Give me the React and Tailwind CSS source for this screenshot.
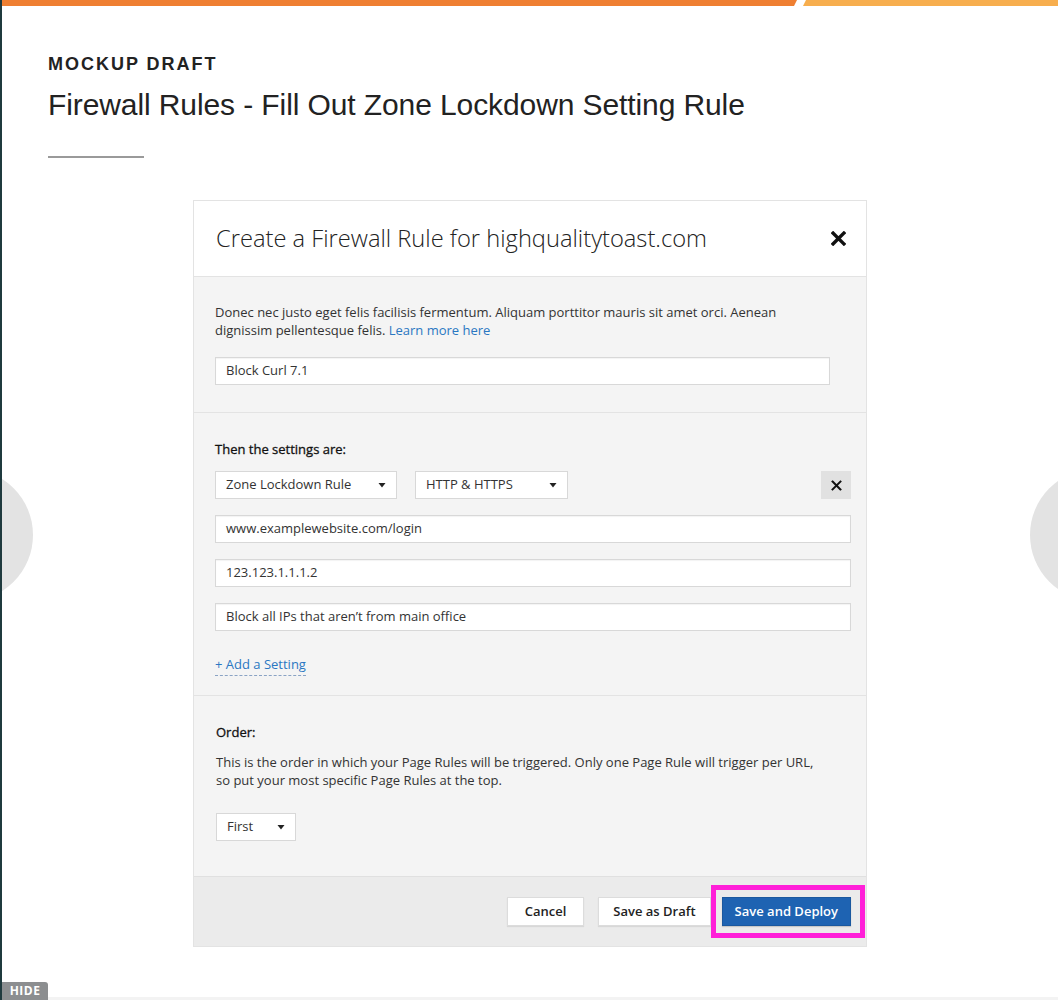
import React from "react";

function Caret() {
  return (
    <svg width="8" height="5" viewBox="0 0 8 5" className="shrink-0">
      <path d="M0.5 0 L7.5 0 L4 4.5 Z" fill="#222" />
    </svg>
  );
}

function XIcon({ size = 14, stroke = 3 }) {
  return (
    <svg width={size} height={size} viewBox="0 0 14 14">
      <path d="M2 2 L12 12 M12 2 L2 12" stroke="#111" strokeWidth={stroke} strokeLinecap="square" />
    </svg>
  );
}

function Field({ children, className = "" }) {
  return (
    <div
      className={
        "h-[28px] flex items-center pl-[10px] bg-white border border-[#d8d8d8] shadow-[inset_0_1px_1px_rgba(0,0,0,0.05)] text-[13px] text-[#333] " +
        className
      }
    >
      {children}
    </div>
  );
}

function Select({ label, className = "" }) {
  return (
    <div
      className={
        "h-[28px] flex items-center justify-between pl-[10px] pr-[10px] bg-white border border-[#d8d8d8] text-[13px] text-[#333] " +
        className
      }
    >
      <span>{label}</span>
      <Caret />
    </div>
  );
}

export default function App() {
  return (
    <div className="relative h-[1000px] w-full overflow-hidden bg-white border-l-2 border-[#1f3a3e] font-['Liberation_Sans',Arial,sans-serif]">
      {/* top bar */}
      <div className="flex h-[6px]">
        <div className="w-[795px] bg-[#ef7f32] [clip-path:polygon(0_0,100%_0,calc(100%-3px)_100%,0_100%)]" />
        <div className="flex-1 ml-[6px] bg-[#f7ae4e] [clip-path:polygon(3px_0,100%_0,100%_100%,0_100%)]" />
      </div>

      {/* page header */}
      <div className="pl-[46px] pt-[47px]">
        <div className="text-[18px] leading-[22px] font-bold tracking-[0.11em] text-[#222]">MOCKUP DRAFT</div>
        <h1 className="mt-[12px] text-[30px] leading-[36px] tracking-[-0.1px] text-[#222]">
          Firewall Rules - Fill Out Zone Lockdown Setting Rule
        </h1>
        <div className="mt-[33px] w-[96px] h-[2px] bg-[#9a9a9a]" />
      </div>

      {/* modal */}
      <div className="ml-[191px] mt-[42px] w-[674px] border border-[#e3e3e3] font-['Open_Sans',sans-serif] text-[#333]">
        <div className="h-[76px] flex items-center justify-between pl-[22px] pr-[20px] bg-white border-b border-[#e3e3e3]">
          <div className="text-[23.7px] font-light text-[#222]">
            Create a Firewall Rule for highqualitytoast.com
          </div>
          <XIcon size={15} stroke={3.2} />
        </div>

        <div className="bg-[#f4f4f4] pl-[21px] pt-[26px] pb-[27px] border-b border-[#e3e3e3]">
          <p className="text-[13px] leading-[18px]">
            Donec nec justo eget felis facilisis fermentum. Aliquam porttitor mauris sit amet orci. Aenean
            <br />
            dignissim pellentesque felis. <span className="text-[#2a77c2]">Learn more here</span>
          </p>
          <Field className="mt-[18px] w-[615px]">Block Curl 7.1</Field>
        </div>

        <div className="bg-[#f4f4f4] pl-[21px] pr-[15px] pt-[27px] pb-[19px] border-b border-[#e3e3e3]">
          <div className="text-[13px] leading-[18px] text-[#111] [-webkit-text-stroke:0.3px_#111]">Then the settings are:</div>
          <div className="mt-[13px] flex items-center">
            <Select label="Zone Lockdown Rule" className="w-[182px]" />
            <Select label="HTTP & HTTPS" className="w-[153px] ml-[18px]" />
            <div className="ml-auto w-[30px] h-[28px] bg-[#e1e1e1] flex items-center justify-center">
              <XIcon size={11} stroke={2.6} />
            </div>
          </div>
          <div className="mt-[16px] flex flex-col gap-[16px]">
            <Field>www.examplewebsite.com/login</Field>
            <Field>123.123.1.1.1.2</Field>
            <Field>Block all IPs that aren’t from main office</Field>
          </div>
          <div className="mt-[20px]">
            <span className="inline-block text-[13px] leading-[18px] text-[#2a77c2] border-b border-dashed border-[#8aa3c4] pb-[2px]">
              + Add a Setting
            </span>
          </div>
        </div>

        <div className="bg-[#f4f4f4] pl-[22px] pt-[27px] pb-[35px]">
          <div className="text-[13px] leading-[18px] text-[#111] [-webkit-text-stroke:0.3px_#111]">Order:</div>
          <p className="mt-[12px] text-[13px] leading-[18px]">
            This is the order in which your Page Rules will be triggered. Only one Page Rule will trigger per URL,
            <br />
            so put your most specific Page Rules at the top.
          </p>
          <Select label="First" className="mt-[24px] w-[80px]" />
        </div>

        <div className="h-[70px] bg-[#ebebeb] border-t border-[#e0e0e0] flex items-center justify-end pr-[15px]">
          <div className="h-[29px] px-[17px] flex items-center bg-white border border-[#dcdcdc] shadow-[0_1px_1px_rgba(0,0,0,0.08)] text-[13px] font-semibold text-[#222]">
            Cancel
          </div>
          <div className="ml-[14px] h-[29px] px-[14px] flex items-center bg-white border border-[#dcdcdc] shadow-[0_1px_1px_rgba(0,0,0,0.08)] text-[13px] font-semibold text-[#222]">
            Save as Draft
          </div>
          <div className="relative ml-[11px]">
            <div className="absolute -left-[11px] -right-[14px] -top-[12px] -bottom-[12px] border-[5px] border-[#ff1fd8]" />
            <div className="relative h-[29px] px-[12px] flex items-center bg-[#1e63b2] border border-[#1a589f] shadow-[0_1px_1px_rgba(0,0,0,0.15)] text-[13px] font-semibold text-white">
              Save and Deploy
            </div>
          </div>
        </div>
      </div>

      {/* side carousel circles */}
      <div className="absolute left-[-101px] top-[469px] w-[132px] h-[132px] rounded-full bg-[#e3e3e3]" />
      <div className="absolute left-[1028px] top-[469px] w-[132px] h-[132px] rounded-full bg-[#e3e3e3]" />

      {/* bottom strip */}
      <div className="absolute left-0 right-0 bottom-0 h-[3px] bg-[#f3f3f3]" />

      {/* HIDE tab */}
      <div className="absolute left-0 bottom-0 w-[46px] h-[18px] bg-[#8c8e90] rounded-tr-[3px] flex items-center justify-center text-[12px] font-bold tracking-[0.04em] text-white font-['Open_Sans',sans-serif]">
        HIDE
      </div>
    </div>
  );
}
